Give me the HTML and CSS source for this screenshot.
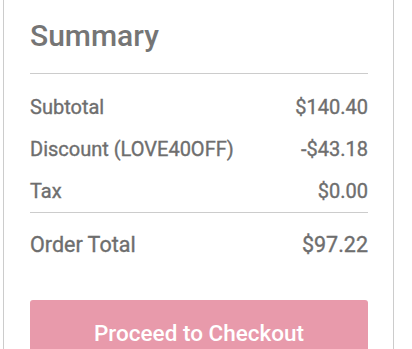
FILE: index.html
```html
<!DOCTYPE html>
<html>
<head>
<meta charset="utf-8">
<link rel="stylesheet" href="styles.css">
</head>
<body>
<div class="card">
  <h2 class="title">Summary</h2>
  <div class="rows">
    <div class="row"><span>Subtotal</span><span>$140.40</span></div>
    <div class="row"><span>Discount (LOVE40OFF)</span><span>-$43.18</span></div>
    <div class="row"><span>Tax</span><span>$0.00</span></div>
  </div>
  <div class="total"><span>Order Total</span><span>$97.22</span></div>
  <button class="checkout">Proceed to Checkout</button>
</div>
</body>
</html>
```
FILE: styles.css
```css
html, body {
  margin: 0;
  padding: 0;
  background: #fff;
}
body {
  font-family: Roboto, "Liberation Sans", sans-serif;
  color: #757575;
}
.card {
  margin-left: 3px;
  width: 391px;
  height: 349px;
  box-sizing: border-box;
  border-left: 1px solid #ccc;
  border-right: 1px solid #ccc;
  padding: 18px 25px 0 26px;
  overflow: hidden;
}
.title {
  margin: 0;
  font-size: 30px;
  font-weight: 500;
  line-height: 36px;
  padding-bottom: 19px;
  border-bottom: 1px solid #ccc;
}
.rows {
  padding-top: 12px;
  border-bottom: 1px solid #ccc;
}
.row, .total {
  display: flex;
  justify-content: space-between;
  font-size: 20px;
  font-weight: 400;
  line-height: 42px;
  color: #6e6e6e;
  -webkit-text-stroke: 0.35px #6e6e6e;
}
.total {
  font-size: 21.5px;
  line-height: 36px;
  padding-top: 14px;
}
.checkout {
  display: block;
  width: 100%;
  margin-top: 37px;
  height: 66px;
  border: none;
  border-radius: 3px;
  background: #e89aab;
  color: #fff;
  font-family: Roboto, "Liberation Sans", sans-serif;
  font-size: 22.5px;
  font-weight: 500;
  padding: 0;
  text-align: center;
  line-height: 66px;
}
```
